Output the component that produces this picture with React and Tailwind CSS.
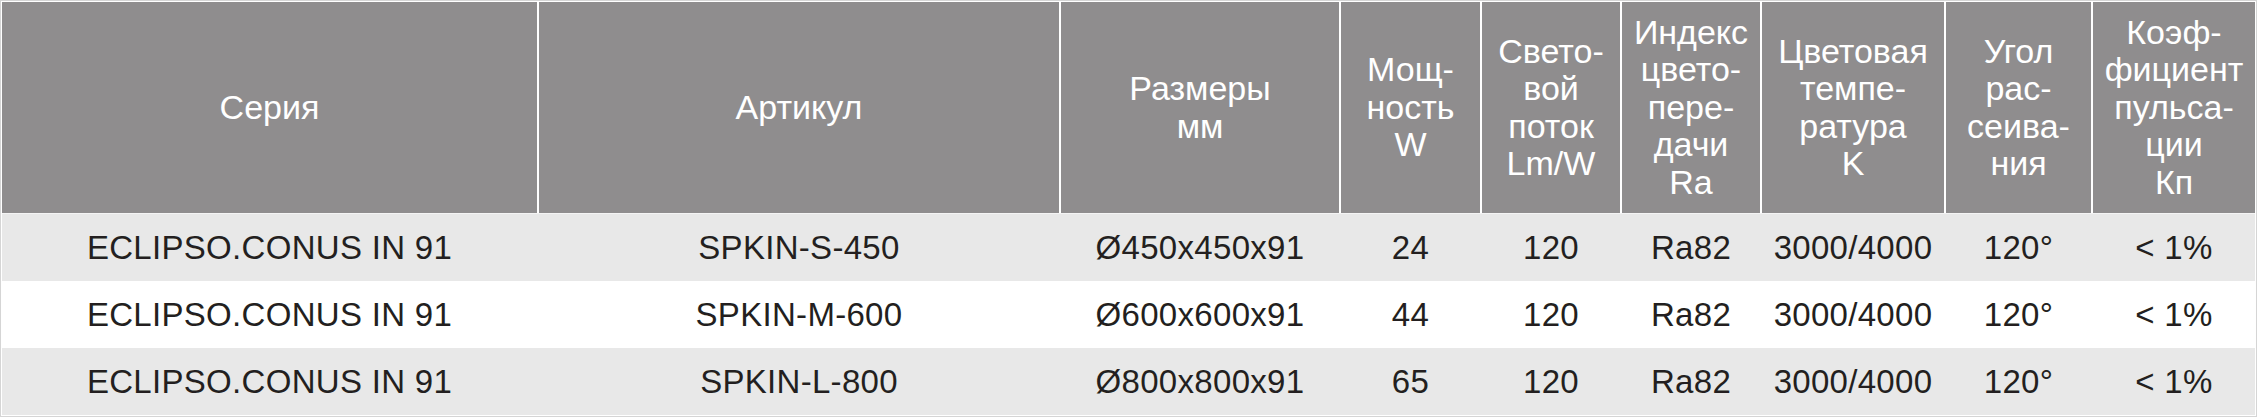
import React from 'react';

const cols = 'grid grid-cols-[535px_520px_278px_139px_138px_138px_182px_145px_162px] gap-x-[2px]';

const headers = [
  ['Серия'],
  ['Артикул'],
  ['Размеры', 'мм'],
  ['Мощ-', 'ность', 'W'],
  ['Свето-', 'вой', 'поток', 'Lm/W'],
  ['Индекс', 'цвето-', 'пере-', 'дачи', 'Ra'],
  ['Цветовая', 'темпе-', 'ратура', 'K'],
  ['Угол', 'рас-', 'сеива-', 'ния'],
  ['Коэф-', 'фициент', 'пульса-', 'ции', 'Кп'],
];

const rows = [
  ['ECLIPSO.CONUS IN 91', 'SPKIN-S-450', 'Ø450x450x91', '24', '120', 'Ra82', '3000/4000', '120°', '< 1%'],
  ['ECLIPSO.CONUS IN 91', 'SPKIN-M-600', 'Ø600x600x91', '44', '120', 'Ra82', '3000/4000', '120°', '< 1%'],
  ['ECLIPSO.CONUS IN 91', 'SPKIN-L-800', 'Ø800x800x91', '65', '120', 'Ra82', '3000/4000', '120°', '< 1%'],
];

const App = () => {
  return (
    <div className="w-[2258px] h-[417px] bg-white font-['Liberation_Sans',Arial,sans-serif]">
      <div className="w-[2257px] border border-[#d5d5d5] bg-white p-px">
        {/* header */}
        <div className={`${cols} h-[211px] bg-white`}>
          {headers.map((lines, i) => (
            <div
              key={i}
              className="bg-[#8f8d8e] flex flex-col items-center justify-center text-white text-[34px] leading-[37.5px] text-center whitespace-nowrap"
            >
              {lines.map((l, j) => (
                <span key={j}>{l}</span>
              ))}
            </div>
          ))}
        </div>

        <div className="h-px bg-[#f4f4f4]" />

        {/* rows */}
        {rows.map((row, r) => (
          <div
            key={r}
            className={`${cols} h-[67px] ${r % 2 === 0 ? 'bg-[#e8e8e8]' : 'bg-white'}`}
          >
            {row.map((cell, c) => (
              <div
                key={c}
                className="flex items-center justify-center text-[33px] text-[#231f20] tracking-[0.3px] whitespace-nowrap"
              >
                {cell}
              </div>
            ))}
          </div>
        ))}
      </div>
    </div>
  );
};

export default App;
